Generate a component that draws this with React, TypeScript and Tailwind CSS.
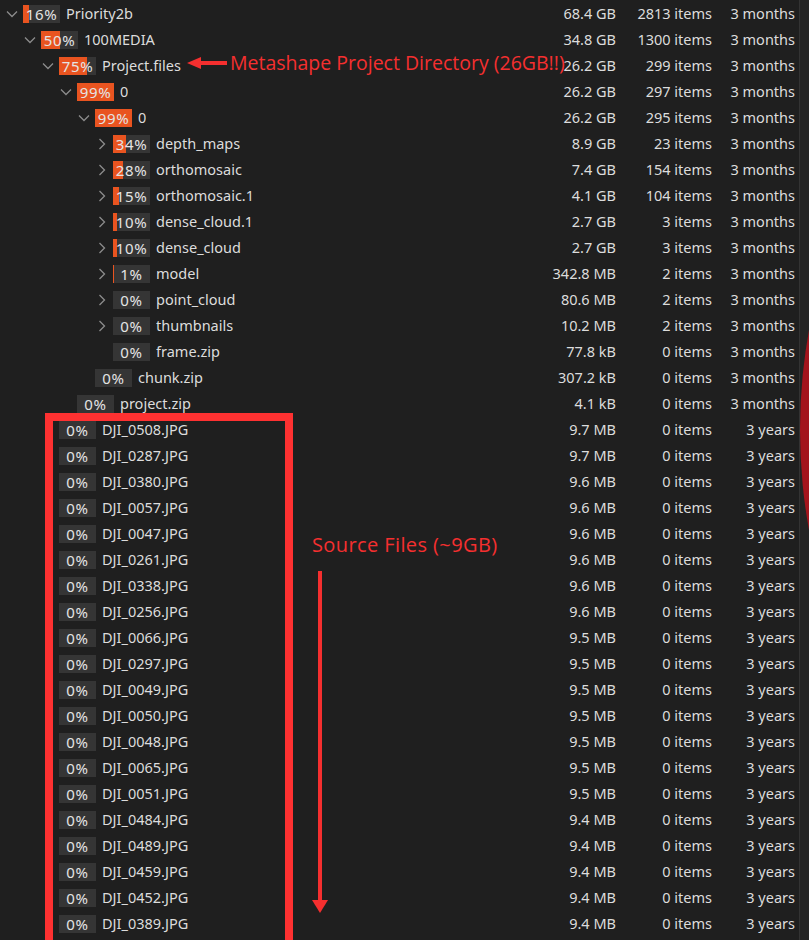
import type { ReactNode } from 'react';

type Row = {
  depth: number;
  pct: number;
  name: string;
  size: string;
  items: string;
  date: string;
  chevron?: 'down' | 'right';
};

const tree: Row[] = [
  { depth: 0, pct: 16, name: 'Priority2b', size: '68.4 GB', items: '2813 items', date: '3 months', chevron: 'down' },
  { depth: 1, pct: 50, name: '100MEDIA', size: '34.8 GB', items: '1300 items', date: '3 months', chevron: 'down' },
  { depth: 2, pct: 75, name: 'Project.files', size: '26.2 GB', items: '299 items', date: '3 months', chevron: 'down' },
  { depth: 3, pct: 99, name: '0', size: '26.2 GB', items: '297 items', date: '3 months', chevron: 'down' },
  { depth: 4, pct: 99, name: '0', size: '26.2 GB', items: '295 items', date: '3 months', chevron: 'down' },
  { depth: 5, pct: 34, name: 'depth_maps', size: '8.9 GB', items: '23 items', date: '3 months', chevron: 'right' },
  { depth: 5, pct: 28, name: 'orthomosaic', size: '7.4 GB', items: '154 items', date: '3 months', chevron: 'right' },
  { depth: 5, pct: 15, name: 'orthomosaic.1', size: '4.1 GB', items: '104 items', date: '3 months', chevron: 'right' },
  { depth: 5, pct: 10, name: 'dense_cloud.1', size: '2.7 GB', items: '3 items', date: '3 months', chevron: 'right' },
  { depth: 5, pct: 10, name: 'dense_cloud', size: '2.7 GB', items: '3 items', date: '3 months', chevron: 'right' },
  { depth: 5, pct: 1, name: 'model', size: '342.8 MB', items: '2 items', date: '3 months', chevron: 'right' },
  { depth: 5, pct: 0, name: 'point_cloud', size: '80.6 MB', items: '2 items', date: '3 months', chevron: 'right' },
  { depth: 5, pct: 0, name: 'thumbnails', size: '10.2 MB', items: '2 items', date: '3 months', chevron: 'right' },
  { depth: 5, pct: 0, name: 'frame.zip', size: '77.8 kB', items: '0 items', date: '3 months' },
  { depth: 4, pct: 0, name: 'chunk.zip', size: '307.2 kB', items: '0 items', date: '3 months' },
  { depth: 3, pct: 0, name: 'project.zip', size: '4.1 kB', items: '0 items', date: '3 months' },
];

const photos: [string, string][] = [
  ['0508', '9.7 MB'],
  ['0287', '9.7 MB'],
  ['0380', '9.6 MB'],
  ['0057', '9.6 MB'],
  ['0047', '9.6 MB'],
  ['0261', '9.6 MB'],
  ['0338', '9.6 MB'],
  ['0256', '9.6 MB'],
  ['0066', '9.5 MB'],
  ['0297', '9.5 MB'],
  ['0049', '9.5 MB'],
  ['0050', '9.5 MB'],
  ['0048', '9.5 MB'],
  ['0065', '9.5 MB'],
  ['0051', '9.5 MB'],
  ['0484', '9.4 MB'],
  ['0489', '9.4 MB'],
  ['0459', '9.4 MB'],
  ['0452', '9.4 MB'],
  ['0389', '9.4 MB'],
];

const rows: Row[] = [
  ...tree,
  ...photos.map(([n, size]) => ({
    depth: 2,
    pct: 0,
    name: `DJI_${n}.JPG`,
    size,
    items: '0 items',
    date: '3 years',
  })),
];

const Chevron = ({ dir }: { dir?: 'down' | 'right' }): ReactNode => {
  if (!dir) return <span className="w-[14px] shrink-0" />;
  return (
    <span className="flex w-[14px] shrink-0 items-center justify-center">
      {dir === 'down' ? (
        <svg width="12" height="8" viewBox="0 0 12 8" fill="none">
          <path d="M1 1.5 L6 6.5 L11 1.5" stroke="#8c8c8c" strokeWidth="1.3" />
        </svg>
      ) : (
        <svg width="8" height="12" viewBox="0 0 8 12" fill="none">
          <path d="M1.5 1 L6.5 6 L1.5 11" stroke="#8c8c8c" strokeWidth="1.3" />
        </svg>
      )}
    </span>
  );
};

const Usage = ({ pct }: { pct: number }) => (
  <span className="relative ml-[4px] flex h-[18px] w-[37px] shrink-0 items-center justify-center overflow-hidden bg-[#353535]">
    <span
      className="absolute inset-y-0 left-0 bg-[#e95420]"
      style={{ width: `${pct}%` }}
    />
    <span className="relative -mt-[1px] text-[15px] leading-[18px] tracking-[0.6px] text-[#e4e4e4]">
      {pct}%
    </span>
  </span>
);

const App = () => {
  return (
    <div
      className="relative flex h-[940px] w-[809px] overflow-hidden bg-[#1f1f1f] text-[#dcdcdc]"
      style={{ fontFamily: '"Noto Sans", "Open Sans", sans-serif' }}
    >
      <div className="flex flex-1 flex-col pt-[1px]">
        {rows.map((row, i) => (
          <div key={i} className="flex h-[26px] items-center text-[14.5px]">
            <div
              className="flex min-w-0 flex-1 items-center"
              style={{ paddingLeft: 5 + row.depth * 18 }}
            >
              <Chevron dir={row.chevron} />
              <Usage pct={row.pct} />
              <span className="ml-[6px] truncate">{row.name}</span>
            </div>
            <div className="w-[90px] text-right">{row.size}</div>
            <div className="w-[96px] text-right">{row.items}</div>
            <div className="w-[83px] text-right">{row.date}</div>
            <div className="w-[4px]" />
          </div>
        ))}
      </div>
      <div className="w-[10px] border-l border-[#333333] bg-[#242424]" />

      {/* annotations drawn on top of the listing */}
      <div className="absolute left-[800px] top-[-130px] h-[1120px] w-[1120px] rounded-full bg-[#a3141c]" />

      <div className="absolute left-[187px] top-[56px] flex items-center">
        <svg width="42" height="14" viewBox="0 0 42 14">
          <polygon points="0,7 14,1 14,13" fill="#f52f2f" />
          <rect x="13" y="5" width="27" height="4" fill="#f52f2f" />
        </svg>
      </div>
      <div
        className="absolute left-[230px] top-[48px] text-[19.5px] text-[#f52f2f]"
        style={{ fontFamily: '"Open Sans", sans-serif' }}
      >
        Metashape Project Directory (26GB!!)
      </div>

      <div className="absolute left-[45px] top-[413px] h-[560px] w-[248px] border-[8px] border-[#fe3131]" />

      <div
        className="absolute left-[312px] top-[530px] text-[20px] tracking-[0.4px] text-[#f52f2f]"
        style={{ fontFamily: '"Open Sans", sans-serif' }}
      >
        Source Files (~9GB)
      </div>
      <svg
        className="absolute left-[311px] top-[571px]"
        width="18"
        height="344"
        viewBox="0 0 18 344"
      >
        <rect x="7" y="0" width="4" height="332" fill="#f52f2f" />
        <polygon points="1,329 17,329 9,342" fill="#f52f2f" />
      </svg>
    </div>
  );
};

export default App;
